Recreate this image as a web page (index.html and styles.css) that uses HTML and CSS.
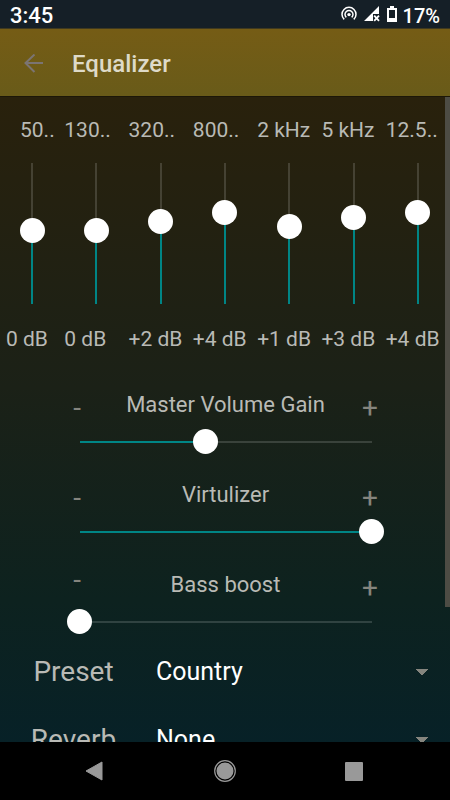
FILE: index.html
```html
<!DOCTYPE html>
<html lang="en">
<head>
<meta charset="utf-8">
<meta name="viewport" content="width=device-width, initial-scale=1">
<title>Equalizer</title>
<link rel="stylesheet" href="styles.css">
</head>
<body>
<div class="status">
  <span>3:45</span>
  <div class="status-icons">
    <svg width="16" height="16" viewBox="0 0 16 16" fill="none" stroke="#fff" stroke-width="1.5" aria-hidden="true">
      <path d="M3.2 13.4A7 7 0 1 1 12.8 13.4"/>
      <path d="M5.3 11.4A4 4 0 1 1 10.7 11.4"/>
      <circle cx="8" cy="8.6" r="1.7" fill="#fff" stroke="none"/>
    </svg>
    <svg class="signal" width="16" height="16" viewBox="0 0 16 16" aria-hidden="true">
      <path d="M15 0V8H9V15H0Z" fill="#fff"/>
      <path d="M10.2 9.7L15 14.8M15 9.7L10.2 14.8" stroke="#fff" stroke-width="1.8"/>
    </svg>
    <svg class="battery" width="10" height="16" viewBox="0 0 10 16" aria-hidden="true">
      <path d="M3 0H7V2H10V16H0V2H3ZM2 4V12H8V4Z" fill="#fff" fill-rule="evenodd"/>
    </svg>
    <span class="charge">17%</span>
  </div>
</div>

<header class="toolbar">
  <button class="back" aria-label="Back">
    <svg width="20" height="20" viewBox="0 0 20 20" fill="none" stroke="currentColor" stroke-width="2"><path d="M19 9H2M10.5 0.5L1.5 9L10.5 18"/></svg>
  </button>
  <h1>Equalizer</h1>
</header>

<main>
  <section class="bands">
    <div class="band band-first"><label for="b1">50..</label><input id="b1" type="range" min="-16" max="15" value="0" style="--fill:51.6%"><output for="b1">0 dB</output></div>
    <div class="band"><label for="b2">130..</label><input id="b2" type="range" min="-16" max="15" value="0" style="--fill:51.6%"><output for="b2">0 dB</output></div>
    <div class="band"><label for="b3">320..</label><input id="b3" type="range" min="-16" max="15" value="2" style="--fill:58.1%"><output for="b3">+2 dB</output></div>
    <div class="band"><label for="b4">800..</label><input id="b4" type="range" min="-16" max="15" value="4" style="--fill:64.5%"><output for="b4">+4 dB</output></div>
    <div class="band"><label for="b5">2 kHz</label><input id="b5" type="range" min="-16" max="15" value="1" style="--fill:54.8%"><output for="b5">+1 dB</output></div>
    <div class="band"><label for="b6">5 kHz</label><input id="b6" type="range" min="-16" max="15" value="3" style="--fill:61.3%"><output for="b6">+3 dB</output></div>
    <div class="band"><label for="b7">12.5..</label><input id="b7" type="range" min="-16" max="15" value="4" style="--fill:64.5%"><output for="b7">+4 dB</output></div>
  </section>

  <section class="effects">
    <div class="effect">
      <button aria-label="Decrease master volume gain">-</button>
      <label for="gain">Master Volume Gain</label>
      <button aria-label="Increase master volume gain">+</button>
      <input id="gain" type="range" min="0" max="100" value="43" style="--fill:43%">
    </div>
    <div class="effect">
      <button aria-label="Decrease virtulizer">-</button>
      <label for="virt">Virtulizer</label>
      <button aria-label="Increase virtulizer">+</button>
      <input id="virt" type="range" min="0" max="100" value="100" style="--fill:100%">
    </div>
    <div class="effect">
      <button class="raised" aria-label="Decrease bass boost">-</button>
      <label for="bass">Bass boost</label>
      <button aria-label="Increase bass boost">+</button>
      <input id="bass" type="range" min="0" max="100" value="0" style="--fill:0%">
    </div>
  </section>

  <section class="choices">
    <div class="choice"><label for="preset">Preset</label><select id="preset"><option>Country</option></select></div>
    <div class="choice"><label for="reverb">Reverb</label><select id="reverb"><option>None</option></select></div>
  </section>
  <div class="scrollbar"></div>
</main>

<nav class="system-nav">
  <button aria-label="System back"><svg width="20" height="22" viewBox="0 0 20 22"><path d="M18 2V20L2 11Z" fill="#999" stroke="#999" stroke-linejoin="round"/></svg></button>
  <button aria-label="Home"><svg width="22" height="22" viewBox="0 0 22 22"><circle cx="11" cy="11" r="10.3" fill="none" stroke="#999" stroke-width="1.2"/><circle cx="11" cy="11" r="8.5" fill="#999"/></svg></button>
  <button aria-label="Recent apps"><svg width="18" height="19" viewBox="0 0 18 19"><rect width="18" height="19" rx="1" fill="#999"/></svg></button>
</nav>
</body>
</html>
```
FILE: styles.css
```css
* { box-sizing: border-box; }

body {
  margin: 0;
  height: 100vh;
  display: flex;
  flex-direction: column;
  overflow: hidden;
  background: #000;
  color: #b9bab5;
  font: 22px/26px Roboto, sans-serif;
}

button, select, input { font: inherit; color: inherit; margin: 0; }
button { padding: 0; border: 0; background: none; }
svg { display: block; }

.status {
  height: 28px;
  flex: none;
  display: flex;
  justify-content: space-between;
  align-items: center;
  padding: 3px 10px 0;
  background: #151f27;
  color: #fff;
  font-weight: 500;
}
.status-icons { display: flex; align-items: center; }
.status-icons svg { margin-bottom: 3px; }
.signal { margin-left: 7px; }
.battery { margin: 0 6px 0 7px; }
.charge { font-size: 20px; }

.toolbar {
  height: 68px;
  flex: none;
  display: flex;
  align-items: center;
  gap: 28px;
  padding: 2px 24px 0;
  border-top: 1px solid #3f3920;
  background: linear-gradient(#755c15, #695b19);
}
.toolbar h1 { margin: 0; font-size: 24px; font-weight: 500; color: #dedac8; }
.back { color: #7b7472; }

main {
  flex: 1;
  min-height: 0;
  overflow: hidden;
  position: relative;
  border-top: 1px solid #1c1708;
  background: linear-gradient(#29210c, #1b2117 45%, #0d221f 78%, #072127);
}
.scrollbar {
  position: absolute;
  top: 0;
  right: 0;
  width: 5px;
  height: 79%;
  background: #4d4c44;
}

input[type="range"] {
  appearance: none;
  --rest: rgba(255, 255, 255, .15);
  background-color: transparent;
  background-repeat: no-repeat;
  background-position: center;
}
input[type="range"]::-webkit-slider-thumb {
  appearance: none;
  width: 25px;
  height: 25px;
  border-radius: 50%;
  background: #fff;
}

.bands {
  display: grid;
  grid-template-columns: repeat(7, 1fr);
  padding: 20px 0 0;
  font-size: 21px;
}
.band { display: flex; flex-direction: column; white-space: nowrap; }
.band-first label { padding-left: 20px; }
.band-first output { padding-left: 6px; }
.band input {
  writing-mode: vertical-lr;
  direction: rtl;
  align-self: center;
  width: 25px;
  height: 166px;
  margin: 7px 0 10px;
  background-image: linear-gradient(to top, #008585 var(--fill), var(--rest) var(--fill));
  background-size: 2px calc(100% - 25px);
}

.effects {
  display: grid;
  gap: 28px;
  padding: 40px 66px 0 67px;
}
.effect {
  display: grid;
  grid-template-columns: 20px 1fr 28px;
  text-align: center;
}
.effect label { margin-right: -8px; }
.effect button {
  font-size: 28px;
  line-height: 32px;
  color: #85857e;
}
.effect .raised { align-self: start; line-height: 16px; }
.effect input {
  grid-column: 1 / -1;
  width: 100%;
  height: 25px;
  margin-top: 5px;
  background-image: linear-gradient(to right, #008585 var(--fill), var(--rest) var(--fill));
  background-size: calc(100% - 25px) 2px;
}

.choices { padding-top: 4px; }
.choice {
  display: grid;
  grid-template-columns: 147px 1fr;
  height: 68px;
  align-items: center;
  font-size: 28px;
}
.choice label { text-align: center; }
.choice select {
  appearance: none;
  height: 40px;
  margin-right: 22px;
  padding: 0 24px 0 9px;
  border: 0;
  font-size: 25px;
  color: #fff;
  background: linear-gradient(to bottom left, #85857e 50%, transparent 51%) right 6px center / 6px 6px no-repeat,
    linear-gradient(to bottom right, #85857e 50%, transparent 51%) right 0 center / 6px 6px no-repeat;
}

.system-nav {
  height: 58px;
  flex: none;
  display: flex;
  justify-content: space-between;
  align-items: center;
  padding: 0 87px 0 84px;
}
```
